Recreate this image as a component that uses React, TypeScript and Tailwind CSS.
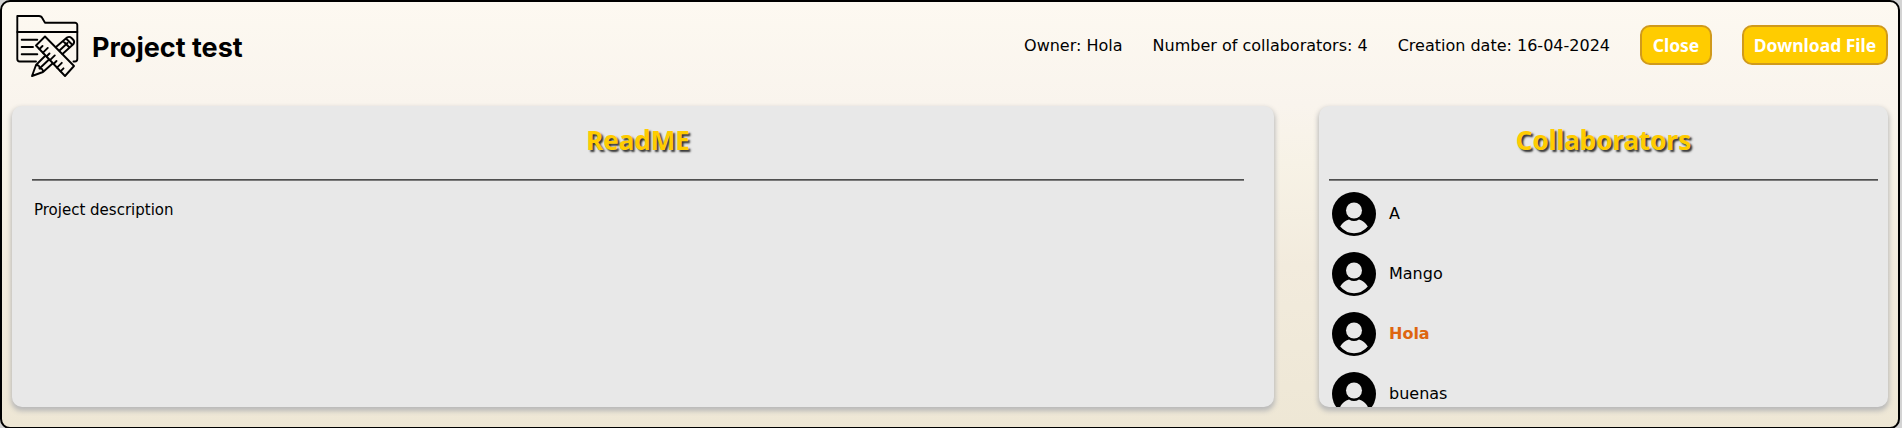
import React from "react";

const people = [
  { name: "A", owner: false },
  { name: "Mango", owner: false },
  { name: "Hola", owner: true },
  { name: "buenas", owner: false },
];

function ProjectIcon() {
  return (
    <svg width="64" height="64" viewBox="0 0 64 64" fill="none" stroke="#000" strokeWidth="1.9" strokeLinejoin="round" strokeLinecap="round" className="shrink-0">
      <path d="M21 47.500H4.800a2.500 2.500 0 0 1-2.500-2.500V2H24q2.500 0 3.500 2.500L30 8.700H60a2.300 2.300 0 0 1 2.300 2.300V45a2.500 2.500 0 0 1-2.500 2.500H58.500" />
      <path d="M2.300 18H62.300M6.700 25.700H22.300M6.700 33H18M6.700 40.300H22.300" />
      <path d="M21 31.500L30 22.500L59 52L50 62Z" />
      <path d="M24.500 35l3-3M28 38.700l4.800-4.800M31.500 42.500l3-3M35 46.200l4.800-4.800M38.500 50l3-3M42 53.600l4.800-4.800M45.500 57.300l3-3" />
      <path d="M41 33L52 23.500q2.500-1.500 4.500 .5l1.500 1.500q2 2 .5 4.500L47.500 40M44.500 36.500L52.500 29M48 27l6.500 6.500M51 24.500l6.500 6.500" />
      <path d="M29.500 42.500L21 51L17 62L28 58L37.500 49.500M21 51q4 0 3.500 3.500q3.500-.5 3.500 3.500M24.500 54.500L33.500 46" />
    </svg>
  );
}

function Avatar() {
  return (
    <svg width="44" height="44" viewBox="0 0 44 44" className="shrink-0">
      <circle cx="22" cy="22" r="22" fill="#000" />
      <circle cx="22" cy="18.500" r="8" fill="#e8e8e8" />
      <path d="M8.200 34.500Q11.500 29 17 27.500Q22 30.500 27 27.500Q32.500 29 35.800 34.500Q30 41.200 22 41.200Q14 41.200 8.200 34.500Z" fill="#e8e8e8" />
    </svg>
  );
}

function Title({ children }: { children: React.ReactNode }) {
  return (
    <h2 className="h-[73px] pt-4 text-center font-['Noto_Sans',sans-serif] text-[26px] leading-[36px] font-bold text-[#ffcc00] [text-shadow:2px_2px_2px_#333]">
      {children}
    </h2>
  );
}

const panel = "overflow-hidden rounded-[10px] bg-[#e8e8e8] shadow-[0_3px_5px_1px_#b9b9b9]";
const button = "h-10 rounded-[10px] border-2 border-[#d09a1c] bg-[#ffcc00] text-center font-['Noto_Sans',sans-serif] text-[17.5px] leading-[36px] font-bold whitespace-nowrap text-white";
const rule = "h-0.5 border-t border-b border-t-[#4f4f4f] border-b-[#7b7b7b]";

export default function App() {
  return (
    <div className="h-[428px] overflow-hidden bg-[#d3d3d3] font-['DejaVu_Sans',sans-serif] text-base text-black">
      <main className="flex h-[429px] w-[1900px] flex-col rounded-[10px] border-2 border-black bg-[linear-gradient(to_bottom,#fdf9f1_0%,#f9f4ed_24%,#f7f2e6_38%,#f2ebdd_62%,#eee7d5_100%)]">
        <header className="flex h-[104px] shrink-0 items-start justify-between pr-2.5 pl-[13px]">
          <div className="flex items-center gap-[13px] pt-3">
            <ProjectIcon />
            <h1 className="pt-1 font-['Inter',sans-serif] text-[27px] leading-8 font-bold whitespace-nowrap">Project test</h1>
          </div>
          <div className="flex items-center gap-[30px] pt-[23px] whitespace-nowrap">
            <span className="pt-0.5">Owner: Hola</span>
            <span className="pt-0.5">Number of collaborators: 4</span>
            <span className="pt-0.5">Creation date: 16-04-2024</span>
            <button className={button + " w-[72px]"}>Close</button>
            <button className={button + " w-[146px]"}>Download File</button>
          </div>
        </header>
        <div className="flex h-[301px] justify-between px-2.5">
          <section className={panel + " w-[1262px] pr-[30px] pl-5"}>
            <Title>ReadME</Title>
            <div className={rule} />
            <p className="pt-[19px] pl-0.5 text-[15px] leading-5">Project description</p>
          </section>
          <section className={panel + " w-[569px]"}>
            <Title>Collaborators</Title>
            <div className={rule + " mx-2.5"} />
            <ul className="flex flex-col gap-4 pt-[11px] pl-[13px]">
              {people.map((p) => (
                <li key={p.name} className="flex items-center gap-[13px]">
                  <Avatar />
                  <span className={p.owner ? "font-bold text-[#de6510]" : ""}>{p.name}</span>
                </li>
              ))}
            </ul>
          </section>
        </div>
      </main>
    </div>
  );
}
